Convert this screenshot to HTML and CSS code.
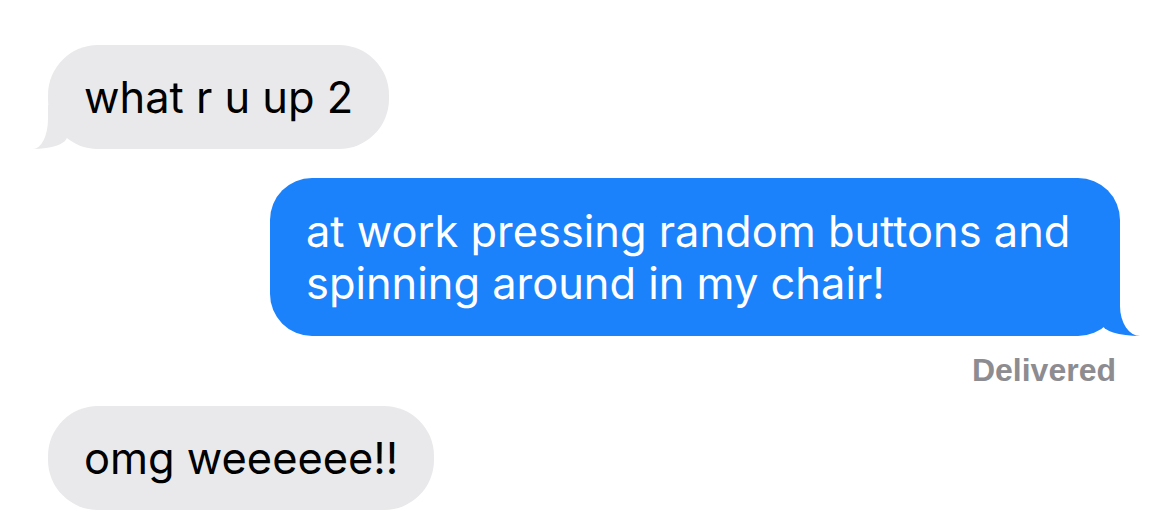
FILE: index.html
```html
<!DOCTYPE html>
<html>
<head>
  <meta charset="UTF-8" />
  <title>Messages</title>
  <link rel="stylesheet" href="styles.css">
</head>
<body>
  <div class="chat">
    <div class="bubble them tail">what r u up 2</div>
    <div class="bubble me tail">at work pressing random buttons and spinning around in my chair!</div>
    <div class="status">Delivered</div>
    <div class="bubble them last">omg weeeeee!!</div>
  </div>
</body>
</html>
```
FILE: styles.css
```css
body {
  margin: 0;
  background: #fff;
  font-family: Inter, "Liberation Sans", sans-serif;
}

.chat {
  display: flex;
  flex-direction: column;
  padding: 45px 49px 0 48px;
}

.bubble {
  position: relative;
  box-sizing: border-box;
  max-width: 850px;
  padding: 26px 36px;
  border-radius: 50px;
  font-size: 43.4px;
  line-height: 52px;
}

.them {
  align-self: flex-start;
  background: #e9e9eb;
  color: #000;
}

.me {
  align-self: flex-end;
  margin-top: 29px;
  padding: 27px 36px;
  border-radius: 42px;
  background: #1b82fb;
  color: #fff;
}

.status {
  align-self: flex-end;
  margin: 15px 4px 0 0;
  font-family: "Liberation Sans", sans-serif;
  font-size: 32px;
  font-weight: bold;
  line-height: 38px;
  color: #8c8c91;
}

.last {
  margin-top: 17px;
}

/* tails */
.tail::before,
.tail::after {
  content: "";
  position: absolute;
  bottom: 0;
  height: 44px;
}

.them.tail::before {
  left: -15px;
  width: 34px;
  background: #e9e9eb;
  border-bottom-right-radius: 34px 12px;
}

.them.tail::after {
  left: -40px;
  width: 40px;
  background: #fff;
  border-bottom-right-radius: 15px 30px;
}

.me.tail::before {
  right: -20px;
  width: 38px;
  background: #1b82fb;
  border-bottom-left-radius: 38px 12px;
}

.me.tail::after {
  right: -40px;
  width: 40px;
  background: #fff;
  border-bottom-left-radius: 20px 30px;
}
```
